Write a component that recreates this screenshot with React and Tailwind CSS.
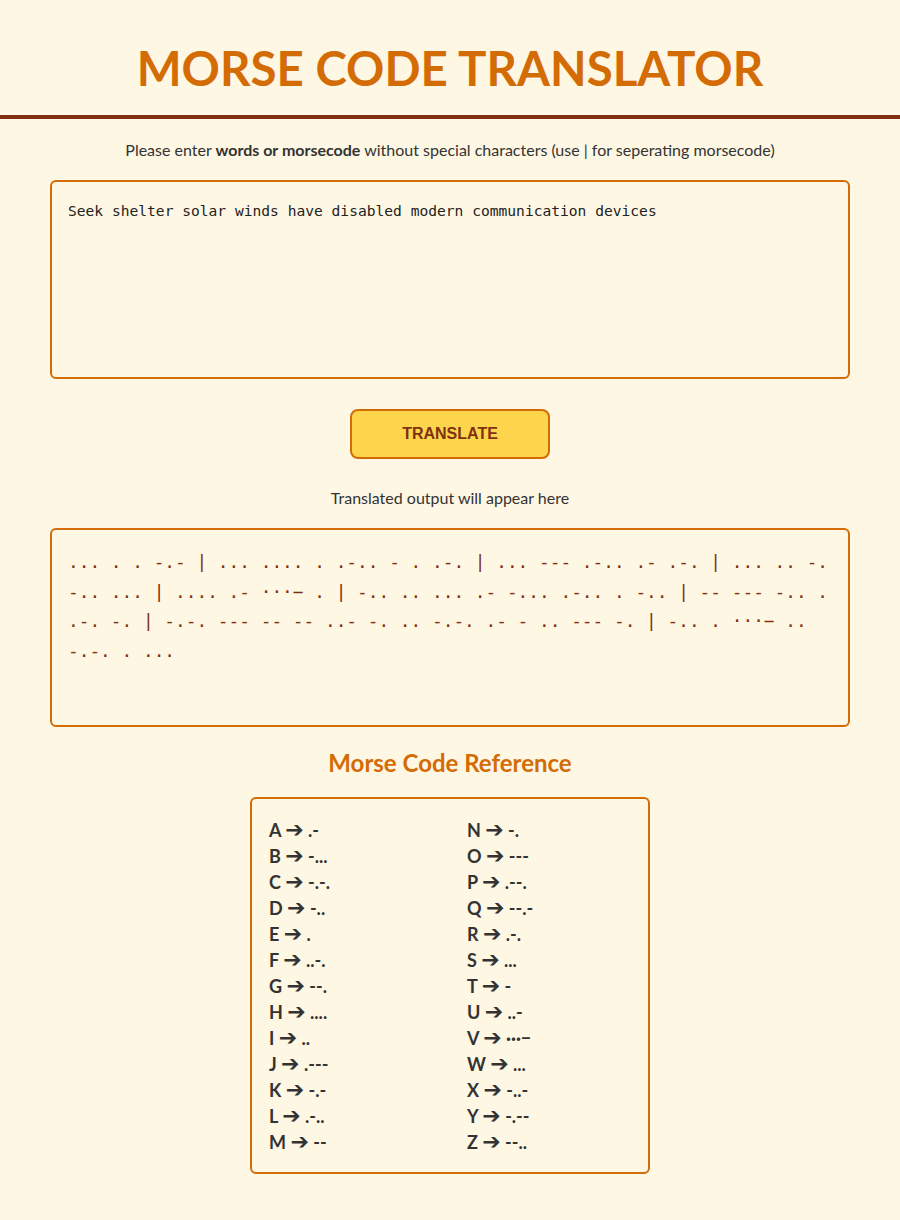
import { useState } from 'react'

const morse = {
  A: '.-', B: '-...', C: '-.-.', D: '-..', E: '.', F: '..-.', G: '--.', H: '....', I: '..',
  J: '.---', K: '-.-', L: '.-..', M: '--', N: '-.', O: '---', P: '.--.', Q: '--.-', R: '.-.',
  S: '...', T: '-', U: '..-', V: '···−', W: '...', X: '-..-', Y: '-.--', Z: '--..',
}

const input = 'Seek shelter solar winds have disabled modern communication devices'

function translate(text) {
  return text
    .toUpperCase()
    .split(' ')
    .map((w) => w.split('').map((c) => morse[c] || '').join(' '))
    .join(' | ')
}

export default function App() {
  const [text, setText] = useState(input)
  const [output, setOutput] = useState(translate(input))
  const letters = Object.keys(morse)
  const left = letters.slice(0, 13)
  const right = letters.slice(13)

  return (
    <div className="min-h-[1220px] bg-[#fef7e4] font-['Lato',sans-serif] text-[#333]">
      <header className="border-b-4 border-[#7f3112] pt-[43px] pb-[23px] text-center">
        <h1 className="text-[47.5px] font-bold leading-[49px] text-[#d46c05]">
          MORSE CODE TRANSLATOR
        </h1>
      </header>

      <main className="mx-auto w-[800px] pt-[21px]">
        <p className="text-center text-[16px] leading-5">
          Please enter <b>words or morsecode</b> without special characters (use | for seperating morsecode)
        </p>

        <textarea
          value={text}
          onChange={(e) => setText(e.target.value)}
          className="mt-[20px] block h-[199px] w-full resize-none rounded-[6px] border-2 border-[#d46c05] bg-[#fef7e4] px-4 py-[18px] font-['DejaVu_Sans_Mono',monospace] text-[14.6px] leading-[22px] text-[#222] outline-none"
        />

        <div className="flex justify-center pt-[30px]">
          <button
            onClick={() => setOutput(translate(text))}
            className="h-[50px] w-[200px] rounded-[8px] border-2 border-[#d46c05] bg-[#fdd54c] font-['Liberation_Sans',sans-serif] text-[16px] font-bold text-[#7f3112]"
          >
            TRANSLATE
          </button>
        </div>

        <p className="pt-[29px] text-center text-[16px] leading-5">Translated output will appear here</p>

        <div className="mt-[20px] h-[199px] w-full rounded-[6px] border-2 border-[#d46c05] px-4 pt-[17px] font-['DejaVu_Sans_Mono',monospace] text-[17.8px] leading-[29.7px] break-words text-[#7f3112]">
          {output}
        </div>

        <h2 className="pt-[20px] text-center text-[24px] font-bold leading-8 text-[#d46c05]">Morse Code Reference</h2>

        <div className="mx-auto mt-[18px] grid w-[400px] grid-cols-[198px_1fr] rounded-[6px] border-2 border-[#d46c05] pl-[17px] pt-[18px] pb-[17px]">
          {[left, right].map((col, i) => (
            <ul key={i}>
              {col.map((l) => (
                <li key={l} className="text-[18px] font-bold leading-[26px] text-[#333]">
                  {l} <span className="font-['DejaVu_Sans',sans-serif] text-[22px] leading-none font-bold">➔</span> {morse[l]}
                </li>
              ))}
            </ul>
          ))}
        </div>
      </main>
    </div>
  )
}
